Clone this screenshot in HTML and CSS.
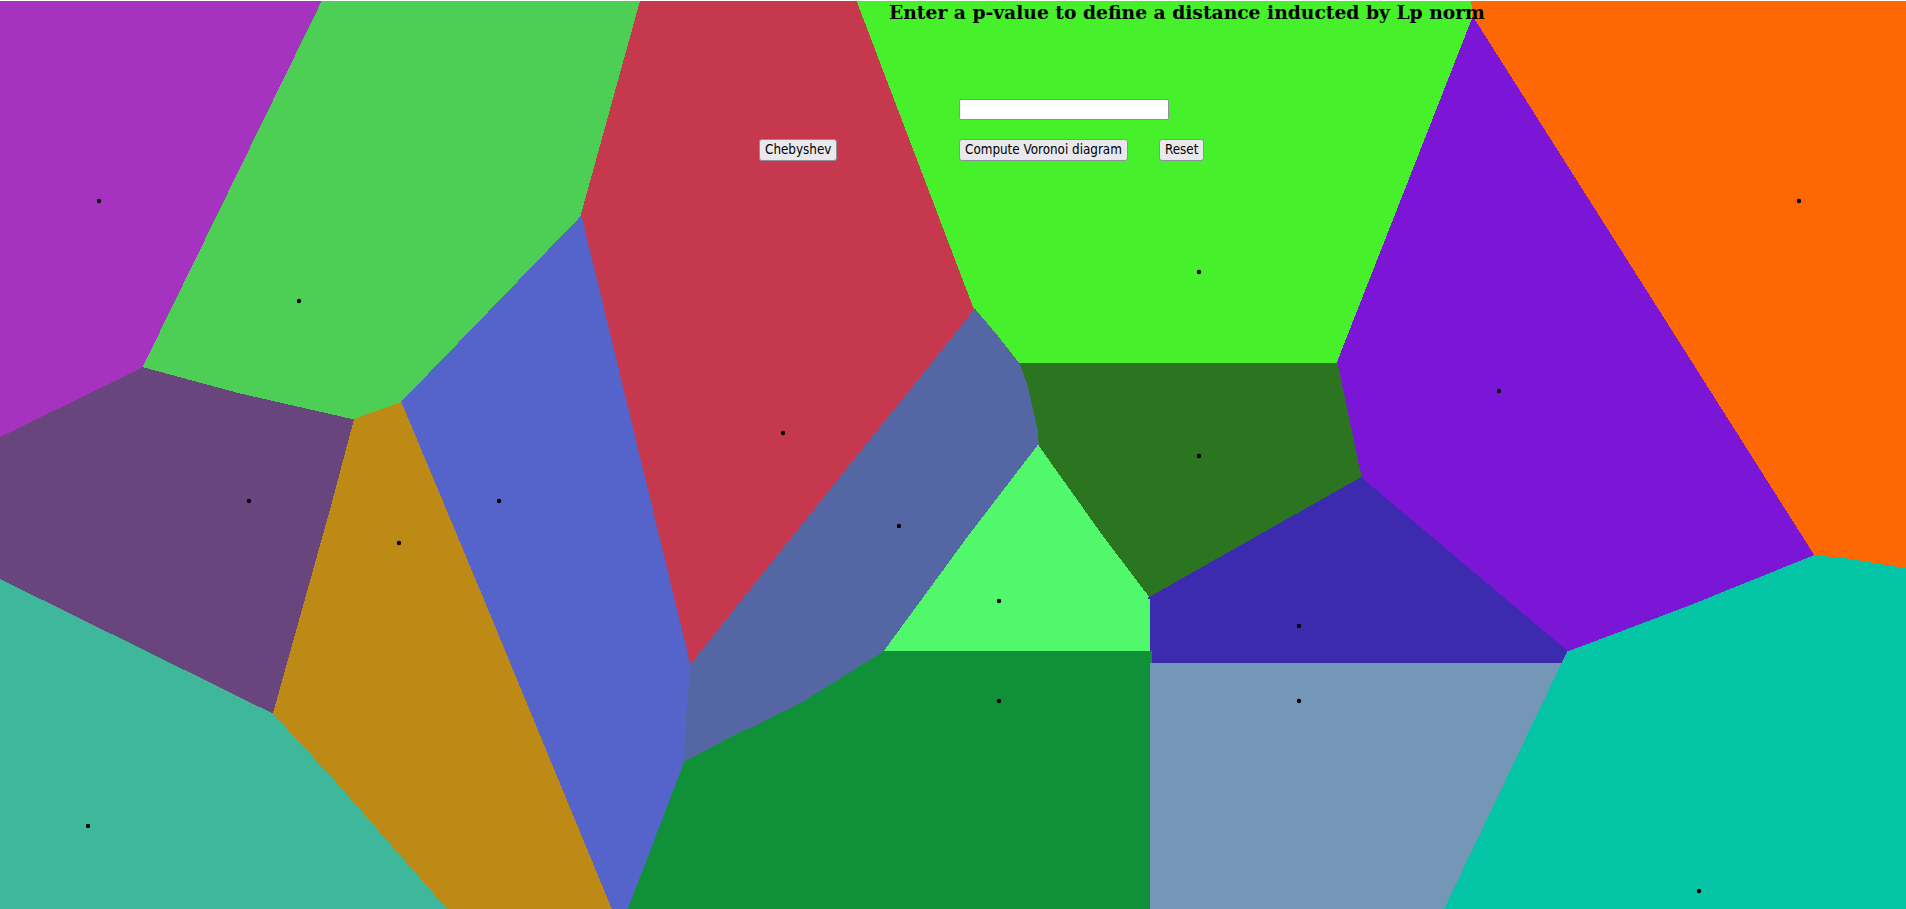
FILE: index.html
```html
<!DOCTYPE html>
<html>
<head>
<meta charset="utf-8">
<title>Voronoi Lp</title>
<link rel="stylesheet" href="styles.css">
</head>
<body>
<div class="stage">
  <svg class="canvas" width="1906" height="909" viewBox="0 0 1906 909" shape-rendering="crispEdges" stroke-width="1.5" stroke-linejoin="round">
    <polygon fill="#a633bf" stroke="#a633bf" points="0,0 323,0 143,368 0,438"/>
    <polygon fill="#4dcf55" stroke="#4dcf55" points="323,0 641,0 581,217 401,403 353,420 239,394 143,368"/>
    <polygon fill="#c6384e" stroke="#c6384e" points="641,0 857,0 975,310 820,503 690,666 581,217"/>
    <polygon fill="#46f02a" stroke="#46f02a" points="857,0 1472,0 1473,18 1337,364 1019,364 997,336 975,310"/>
    <polygon fill="#fd6805" stroke="#fd6805" points="1472,0 1906,0 1906,569 1846,559 1814,556 1473,18"/>
    <polygon fill="#7b16d6" stroke="#7b16d6" points="1473,18 1814,556 1690,606 1568,652 1361,478 1337,364"/>
    <polygon fill="#2c7520" stroke="#2c7520" points="1019,364 1337,364 1361,478 1149,598 1102,536 1038,446 1037,430 1027,386"/>
    <polygon fill="#5466a3" stroke="#5466a3" points="975,310 997,336 1019,364 1027,386 1037,430 1038,446 969,536 884,652 802,703 729,739 683,763 686,706 690,666 820,503"/>
    <polygon fill="#52f86b" stroke="#52f86b" points="1038,446 1102,536 1149,598 1151,598 1151,652 884,652 969,536"/>
    <polygon fill="#3c2bae" stroke="#3c2bae" points="1149,598 1361,478 1513,606 1568,652 1562,664 1151,664 1151,598"/>
    <polygon fill="#109139" stroke="#109139" points="884,652 1151,652 1151,909 627,909 683,763 729,739 802,703"/>
    <polygon fill="#7496b7" stroke="#7496b7" points="1151,664 1562,664 1518,756 1445,909 1151,909"/>
    <polygon fill="#04c4a6" stroke="#04c4a6" points="1562,664 1568,652 1624,631 1690,606 1814,556 1846,559 1906,569 1906,909 1445,909 1518,756"/>
    <polygon fill="#5564cb" stroke="#5564cb" points="581,217 690,666 686,706 683,763 627,909 611,909 485,604 401,403"/>
    <polygon fill="#bd8a16" stroke="#bd8a16" points="353,420 401,403 485,604 611,909 446,909 327,773 272,714 331,503"/>
    <polygon fill="#69457e" stroke="#69457e" points="0,438 143,368 239,394 353,420 331,503 272,714 53,606 0,580"/>
    <polygon fill="#3fb79b" stroke="#3fb79b" points="0,580 53,606 272,714 327,773 446,909 0,909"/>
    <rect x="0" y="0" width="1906" height="1" fill="#ffffff" stroke="none"/>
    <g fill="#000000" stroke="none" shape-rendering="auto">
      <circle cx="99" cy="201" r="2.2"/>
      <circle cx="299" cy="301" r="2.2"/>
      <circle cx="783" cy="433" r="2.2"/>
      <circle cx="1199" cy="272" r="2.2"/>
      <circle cx="1799" cy="201" r="2.2"/>
      <circle cx="1499" cy="391" r="2.2"/>
      <circle cx="1199" cy="456" r="2.2"/>
      <circle cx="249" cy="501" r="2.2"/>
      <circle cx="499" cy="501" r="2.2"/>
      <circle cx="399" cy="543" r="2.2"/>
      <circle cx="899" cy="526" r="2.2"/>
      <circle cx="999" cy="601" r="2.2"/>
      <circle cx="1299" cy="626" r="2.2"/>
      <circle cx="88" cy="826" r="2.2"/>
      <circle cx="999" cy="701" r="2.2"/>
      <circle cx="1299" cy="701" r="2.2"/>
      <circle cx="1699" cy="891" r="2.2"/>
    </g>
  </svg>
  <div class="controls">
    <h3 class="title">Enter a p-value to define a distance inducted by Lp norm</h3>
    <div class="input-row">
      <input class="p-input" type="text">
    </div>
    <div class="button-row">
      <button class="btn">Chebyshev</button>
      <div class="main-buttons">
        <button class="btn">Compute Voronoi diagram</button>
        <button class="btn">Reset</button>
      </div>
    </div>
  </div>
</div>
</body>
</html>
```
FILE: styles.css
```css
html, body {
  margin: 0;
  padding: 0;
  background: #ffffff;
  overflow: hidden;
}

.stage {
  position: relative;
  width: 1906px;
  height: 909px;
}

.canvas {
  position: absolute;
  left: 0;
  top: 0;
  display: block;
}

.controls {
  position: absolute;
  left: 759px;
  top: 0;
  display: flex;
  flex-direction: column;
}

.title {
  margin: 1px 0 0 130px;
  font-family: "DejaVu Serif", serif;
  font-weight: bold;
  font-size: 18.72px;
  line-height: 22px;
  white-space: nowrap;
  color: #000000;
}

.input-row {
  display: flex;
  margin: 76px 0 0 200px;
}

.p-input {
  box-sizing: border-box;
  width: 210px;
  height: 21px;
  margin: 0;
  padding: 1px 2px;
  border: 1px solid #8f8f9d;
  border-radius: 2px;
  background: #ffffff;
  font-family: "DejaVu Sans Condensed", "DejaVu Sans", sans-serif;
  font-size: 13.33px;
}

.button-row {
  display: grid;
  grid-template-columns: 200px auto;
  justify-items: start;
  align-items: center;
  margin-top: 19px;
}

.main-buttons {
  display: flex;
  gap: 31px;
}

.btn {
  box-sizing: border-box;
  height: 22px;
  margin: 0;
  padding: 1px 5px;
  border: 1px solid #8f8f9d;
  border-radius: 3px;
  background: #e9e9ed;
  color: #000000;
  font-family: "DejaVu Sans Condensed", "DejaVu Sans", sans-serif;
  font-stretch: condensed;
  font-size: 13.33px;
  line-height: 18px;
  white-space: nowrap;
}
```
